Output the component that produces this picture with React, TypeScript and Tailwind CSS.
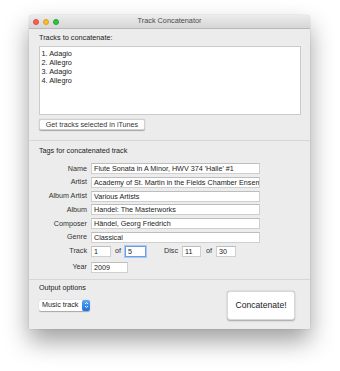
import React from "react";

const font = { fontFamily: '"Liberation Sans", Arial, sans-serif' };

function Field({ value, w, focused }: { value: string; w: string; focused?: boolean }) {
  return (
    <div
      className={`${w} h-[11px] bg-white overflow-hidden whitespace-nowrap pl-[2px] text-[7.2px] leading-[10px] text-[#222] ${
        focused
          ? "border border-[#6b9fe6] shadow-[0_0_0_1px_#a9c9f2]"
          : "border border-[#cfcfcf] border-t-[#bdbdbd]"
      }`}
    >
      {value}
    </div>
  );
}

function Row({ label, value }: { label: string; value: string }) {
  return (
    <div className="flex items-center gap-[4px]">
      <div className="w-[48px] text-right text-[7.2px] leading-[8px] text-[#333]">{label}</div>
      <Field value={value} w="w-[169px]" />
    </div>
  );
}

export default function App() {
  const tags = [
    ["Name", "Flute Sonata in A Minor, HWV 374 'Halle' #1"],
    ["Artist", "Academy of St. Martin in the Fields Chamber Ensemble"],
    ["Album Artist", "Various Artists"],
    ["Album", "Handel: The Masterworks"],
    ["Composer", "Händel, Georg Friedrich"],
    ["Genre", "Classical"],
  ];

  return (
    <div className="min-h-[371px] bg-white pt-[15px] pl-[29px]" style={font}>
      <div className="w-[281px] bg-[#ececec] rounded-t-[4px] shadow-[0_12px_24px_rgba(0,0,0,0.38),0_0_1px_rgba(0,0,0,0.4)]">
        {/* title bar */}
        <div className="relative h-[14px] rounded-t-[4px] bg-gradient-to-b from-[#ececec] to-[#d6d6d6] border-b border-[#b9b9b9] flex items-center justify-center">
          <div className="absolute left-[4px] top-[4px] flex gap-[4px]">
            <span className="w-[6px] h-[6px] rounded-full bg-[#fc5d57] border-[0.5px] border-[#de4a42]" />
            <span className="w-[6px] h-[6px] rounded-full bg-[#fdbb2e] border-[0.5px] border-[#dea024]" />
            <span className="w-[6px] h-[6px] rounded-full bg-[#2ac840] border-[0.5px] border-[#20a533]" />
          </div>
          <span className="text-[7.3px] text-[#4a4a4a]">Track Concatenator</span>
        </div>

        {/* tracks */}
        <div className="pl-[10px] pr-[9px] pt-[5px] pb-[10px] border-b border-[#d6d6d6]">
          <div className="text-[7.3px] leading-[8px] text-[#222]">Tracks to concatenate:</div>
          <div className="mt-[4px] h-[69px] bg-white border border-[#cbcbcb] pl-[1.5px] pt-[1.5px] text-[7.3px] leading-[9px] text-[#222]">
            <div>1. Adagio</div>
            <div>2. Allegro</div>
            <div>3. Adagio</div>
            <div>4. Allegro</div>
          </div>
          <button className="block mt-[4px] h-[11px] w-[106px] bg-white rounded-[2px] shadow-[0_0.5px_1px_rgba(0,0,0,0.3)] border-[0.5px] border-[#d0d0d0] text-[7.2px] leading-[10px] text-[#333]">
            Get tracks selected in iTunes
          </button>
        </div>

        {/* tags */}
        <div className="pl-[10px] pt-[6px] pb-[6px] border-b border-[#d6d6d6]">
          <div className="text-[7.2px] leading-[8px] text-[#222]">Tags for concatenated track</div>
          <div className="mt-[8px] flex flex-col gap-[2.8px]">
            {tags.map(([l, v]) => (
              <Row key={l} label={l} value={v} />
            ))}
          </div>
          <div className="mt-[3px] flex items-center">
            <div className="w-[48px] text-right text-[7.2px] leading-[8px] text-[#333]">Track</div>
            <div className="ml-[4px]">
              <Field value="1" w="w-[20px]" />
            </div>
            <span className="ml-[4px] text-[7.2px] leading-[8px] text-[#333]">of</span>
            <div className="ml-[4px]">
              <Field value="5" w="w-[21px]" focused />
            </div>
            <span className="ml-[18px] text-[7.2px] leading-[8px] text-[#333]">Disc</span>
            <div className="ml-[4px]">
              <Field value="11" w="w-[19px]" />
            </div>
            <span className="ml-[5px] text-[7.2px] leading-[8px] text-[#333]">of</span>
            <div className="ml-[4px]">
              <Field value="30" w="w-[20px]" />
            </div>
          </div>
          <div className="mt-[5px] flex items-center gap-[4px]">
            <div className="w-[48px] text-right text-[7.2px] leading-[8px] text-[#333]">Year</div>
            <Field value="2009" w="w-[37px]" />
          </div>
        </div>

        {/* output */}
        <div className="pl-[10px] pr-[15px] pt-[4px] pb-[9px] flex justify-between">
          <div>
            <div className="text-[7.2px] leading-[8px] text-[#222]">Output options</div>
            <div className="mt-[8px] h-[11px] w-[51px] bg-white rounded-[2px] shadow-[0_0.5px_1px_rgba(0,0,0,0.3)] flex items-center justify-between pl-[3px]">
              <span className="text-[7.2px] leading-[8px] text-[#222]">Music track</span>
              <span className="w-[8px] h-[11px] rounded-[2px] bg-gradient-to-b from-[#5aa6f7] to-[#1b6fe0] flex items-center justify-center">
                <svg width="5" height="8" viewBox="0 0 5 8" fill="none" stroke="white" strokeWidth="0.9">
                  <path d="M1 3 L2.5 1.5 L4 3" />
                  <path d="M1 5 L2.5 6.5 L4 5" />
                </svg>
              </span>
            </div>
          </div>
          <button className="block mt-[7px] w-[68px] h-[29px] bg-white rounded-[3px] shadow-[0_0.5px_1.5px_rgba(0,0,0,0.3)] border-[0.5px] border-[#d8d8d8] text-[8.6px] text-[#222]">
            Concatenate!
          </button>
        </div>
      </div>
    </div>
  );
}
